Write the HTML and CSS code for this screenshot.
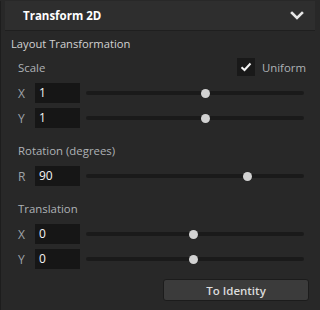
FILE: index.html
```html
<!DOCTYPE html>
<html lang="en">
<head>
    <meta charset="UTF-8">
    <title>Transform 2D</title>
    <link rel="stylesheet" href="styles.css">
</head>
<body>
    <div class="panel">
        <div class="header">
            <span class="title">Transform 2D</span>
            <svg class="chevron" width="14" height="9" viewBox="0 0 14 9">
                <path d="M2 2 L7 7 L12 2" fill="none" stroke="#e6e6e6" stroke-width="2.6" stroke-linecap="square"/>
            </svg>
        </div>

        <div class="content">
            <div class="heading">Layout Transformation</div>

            <!-- Scale -->
            <div class="group">
                <div class="group-head">
                    <span>Scale</span>
                    <label class="check">
                        <span class="box">
                            <svg width="12" height="10" viewBox="0 0 12 10">
                                <path d="M1.5 5.2 L4.5 8 L10.5 1.5" fill="none" stroke="#f2f2f2" stroke-width="2"/>
                            </svg>
                        </span>
                        Uniform
                    </label>
                </div>
                <div class="row">
                    <span class="axis">X</span>
                    <div class="field">1</div>
                    <div class="track"><div class="thumb" style="left: 54.6%"></div></div>
                </div>
                <div class="row">
                    <span class="axis">Y</span>
                    <div class="field">1</div>
                    <div class="track"><div class="thumb" style="left: 54.6%"></div></div>
                </div>
            </div>

            <!-- Rotation -->
            <div class="group">
                <div class="group-head">
                    <span>Rotation (degrees)</span>
                </div>
                <div class="row">
                    <span class="axis">R</span>
                    <div class="field">90</div>
                    <div class="track"><div class="thumb" style="left: 73.9%"></div></div>
                </div>
            </div>

            <!-- Translation -->
            <div class="group">
                <div class="group-head">
                    <span>Translation</span>
                </div>
                <div class="row">
                    <span class="axis">X</span>
                    <div class="field">0</div>
                    <div class="track"><div class="thumb" style="left: 49.5%"></div></div>
                </div>
                <div class="row">
                    <span class="axis">Y</span>
                    <div class="field">0</div>
                    <div class="track"><div class="thumb" style="left: 49.5%"></div></div>
                </div>
            </div>

            <div class="actions">
                <button class="identity">To Identity</button>
            </div>
        </div>
    </div>
</body>
</html>
```

FILE: styles.css
```css
body { margin: 0; background: #282828; font-family: "Open Sans", "DejaVu Sans", sans-serif; font-size: 11.4px; }
.panel { height: 310px; box-sizing: border-box; border-left: 1px solid #1d1d1d; background: #282828; }

.header { display: flex; align-items: center; justify-content: space-between; height: 29px; margin: 1px 5px 0 4px; padding: 0 11px 0 18px; background: #2e2e2e; border-bottom: 1px solid #1f1f1f; }
.title { color: #fff; font-weight: bold; font-size: 11.5px; }
.chevron { display: block; }

.content { padding: 4px 16px 0 10px; }
.heading { height: 18px; line-height: 18px; color: #d2d2d2; font-size: 11.2px; }

.group { margin-top: 5px; padding-left: 7px; }
.group + .group { margin-top: 13px; }
.group-head { display: flex; align-items: center; justify-content: space-between; height: 18px; margin-bottom: 7px; color: #aeb2b6; }

.check { display: flex; align-items: center; gap: 7px; color: #aeb2b6; margin-right: -2px; }
.box { display: flex; align-items: center; justify-content: center; width: 18px; height: 18px; background: #191919; }

.row { display: flex; align-items: center; height: 20px; margin-bottom: 5px; }
.row:last-child { margin-bottom: 0; }
.axis { width: 17px; color: #9ea3a8; font-size: 12px; }
.field { width: 41px; height: 20px; line-height: 20px; padding-left: 4px; background: #161616; color: #f4f4f4; font-size: 12px; }
.track { position: relative; flex: 1; height: 4px; margin-left: 6px; border-radius: 2px; background: #1a1a1a; }
.thumb { position: absolute; top: -2.5px; width: 9px; height: 9px; margin-left: -4.5px; border-radius: 50%; background: #d2d2d2; }

.actions { display: flex; justify-content: flex-end; margin: 10px -5px 0 0; }
.identity { width: 146px; height: 22px; padding: 0; background: #3b3b3b; border: 1px solid #1c1c1c; border-radius: 3px; color: #dcdcdc; font-family: inherit; font-size: 11.5px; font-weight: 600; }
```
